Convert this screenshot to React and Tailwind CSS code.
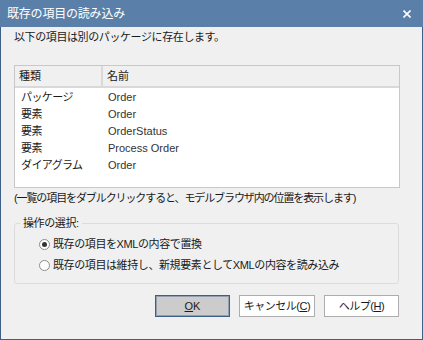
import React from "react";

const rows = [
  { kind: "パッケージ", name: "Order" },
  { kind: "要素", name: "Order" },
  { kind: "要素", name: "OrderStatus" },
  { kind: "要素", name: "Process Order" },
  { kind: "ダイアグラム", name: "Order" },
];

const font = { fontFamily: '"Liberation Sans", "Noto Sans CJK JP", sans-serif' };

function Radio({ checked, children }) {
  return (
    <div className="flex items-center h-[21px] ml-[19px]">
      <span className="w-[11px] h-[11px] rounded-full border border-[#8c8c8c] bg-white flex items-center justify-center">
        {checked && <span className="w-[5px] h-[5px] rounded-full bg-[#333]" />}
      </span>
      <span className="ml-[3px] text-[11px] text-[#1a1a1a] tracking-[-0.4px]">{children}</span>
    </div>
  );
}

export default function App() {
  return (
    <div
      className="w-[423px] h-[340px] flex flex-col bg-[#3d6089] select-none"
      style={font}
    >
      {/* title bar */}
      <div className="h-[27px] bg-[#5a7fa8] flex items-center justify-between pl-[7px] pr-[12px]">
        <span className="text-white text-[12px] tracking-[-0.2px]">既存の項目の読み込み</span>
        <svg width="8" height="8" viewBox="0 0 8 8">
          <path d="M0.5 0.5 L7.5 7.5 M7.5 0.5 L0.5 7.5" stroke="#fff" strokeWidth="1.6" />
        </svg>
      </div>

      {/* body */}
      <div className="flex-1 mx-[1px] mb-[1px] bg-[#f0f0f0] pl-[13px] flex flex-col">
        <div className="mt-[2px] h-[16px] leading-[16px] text-[11px] text-[#1a1a1a] tracking-[-0.4px]">
          以下の項目は別のパッケージに存在します。
        </div>

        {/* list */}
        <div className="mt-[20px] w-[386px] h-[123px] border border-[#c8c8c8] bg-white flex flex-col">
          <div className="h-[22px] flex bg-[#f0f0f0] border-b-2 border-[#d9d9d9] text-[11px] text-[#1a1a1a]">
            <div className="w-[88px] border-r-2 border-[#d9d9d9] pl-[4px] flex items-center">種類</div>
            <div className="flex-1 pl-[4px] flex items-center">名前</div>
          </div>
          <div className="pt-[1px]">
            {rows.map((r, i) => (
              <div key={i} className="flex h-[17px] items-center text-[11px]">
                <div className="w-[93px] pl-[6px] text-[#1a1a1a] tracking-[-0.6px]">{r.kind}</div>
                <div className="text-[#333]">{r.name}</div>
              </div>
            ))}
          </div>
        </div>

        <div className="mt-[2px] h-[16px] leading-[16px] text-[11px] text-[#1a1a1a] tracking-[-1.1px]">
          (一覧の項目をダブルクリックすると、モデルブラウザ内の位置を表示します)
        </div>

        {/* group */}
        <fieldset className="mt-[10px] w-[385px] h-[68px] border border-[#dcdcdc] rounded-[3px] pl-[5px] pt-[4px]">
          <legend className="px-[3px] text-[11px] text-[#1a1a1a] tracking-[-0.4px] leading-[14px]">
            操作の選択:
          </legend>
          <Radio checked>既存の項目をXMLの内容で置換</Radio>
          <Radio>既存の項目は維持し、新規要素としてXMLの内容を読み込み</Radio>
        </fieldset>

        {/* buttons */}
        <div className="mt-[11px] flex justify-end gap-[9px] pr-[23px] text-[11px] text-[#1a1a1a]">
          <button className="w-[75px] h-[22px] bg-[#cccccc] border border-[#3d6089] ring-1 ring-inset ring-[#3d6089]/40">
            <span className="underline">O</span>K
          </button>
          <button className="w-[76px] h-[22px] bg-white border border-[#adadad] tracking-[-0.5px]">
            キャンセル(<span className="underline">C</span>)
          </button>
          <button className="w-[75px] h-[22px] bg-white border border-[#adadad] tracking-[-0.5px]">
            ヘルプ(<span className="underline">H</span>)
          </button>
        </div>
      </div>
    </div>
  );
}
